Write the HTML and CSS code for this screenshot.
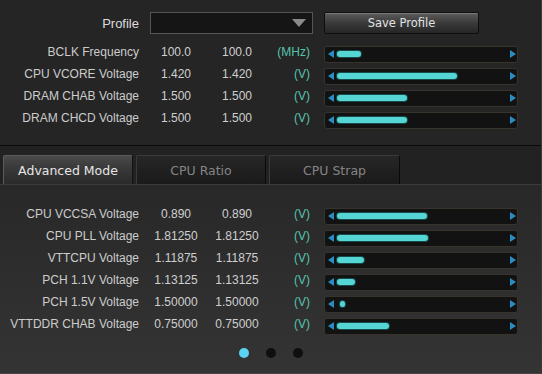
FILE: index.html
```html
<!DOCTYPE html>
<html>
<head>
<meta charset="utf-8">
<link rel="stylesheet" href="styles.css">
</head>
<body>
<div class="app">
  <section class="top">
    <div class="profile-row">
      <span class="profile-label">Profile</span>
      <div class="select"><span class="caret"></span></div>
      <button class="save">Save Profile</button>
    </div>
    <div class="row">
      <span class="label">BCLK Frequency</span><span class="val">100.0</span><span class="val">100.0</span><span class="unit">(MHz)</span>
      <div class="slider"><span class="arr-l"></span><div class="track"><span class="fill" style="width:24px"></span></div><span class="arr-r"></span></div>
    </div>
    <div class="row">
      <span class="label">CPU VCORE Voltage</span><span class="val">1.420</span><span class="val">1.420</span><span class="unit">(V)</span>
      <div class="slider"><span class="arr-l"></span><div class="track"><span class="fill" style="width:120px"></span></div><span class="arr-r"></span></div>
    </div>
    <div class="row">
      <span class="label">DRAM CHAB Voltage</span><span class="val">1.500</span><span class="val">1.500</span><span class="unit">(V)</span>
      <div class="slider"><span class="arr-l"></span><div class="track"><span class="fill" style="width:70px"></span></div><span class="arr-r"></span></div>
    </div>
    <div class="row">
      <span class="label">DRAM CHCD Voltage</span><span class="val">1.500</span><span class="val">1.500</span><span class="unit">(V)</span>
      <div class="slider"><span class="arr-l"></span><div class="track"><span class="fill" style="width:70px"></span></div><span class="arr-r"></span></div>
    </div>
  </section>
  <nav class="tabs">
    <div class="tab active">Advanced Mode</div>
    <div class="tab">CPU Ratio</div>
    <div class="tab">CPU Strap</div>
  </nav>
  <section class="bottom">
    <div class="row">
      <span class="label">CPU VCCSA Voltage</span><span class="val">0.890</span><span class="val">0.890</span><span class="unit">(V)</span>
      <div class="slider"><span class="arr-l"></span><div class="track"><span class="fill" style="width:90px"></span></div><span class="arr-r"></span></div>
    </div>
    <div class="row">
      <span class="label">CPU PLL Voltage</span><span class="val">1.81250</span><span class="val">1.81250</span><span class="unit">(V)</span>
      <div class="slider"><span class="arr-l"></span><div class="track"><span class="fill" style="width:91px"></span></div><span class="arr-r"></span></div>
    </div>
    <div class="row">
      <span class="label">VTTCPU Voltage</span><span class="val">1.11875</span><span class="val">1.11875</span><span class="unit">(V)</span>
      <div class="slider"><span class="arr-l"></span><div class="track"><span class="fill" style="width:27px"></span></div><span class="arr-r"></span></div>
    </div>
    <div class="row">
      <span class="label">PCH 1.1V Voltage</span><span class="val">1.13125</span><span class="val">1.13125</span><span class="unit">(V)</span>
      <div class="slider"><span class="arr-l"></span><div class="track"><span class="fill" style="width:18px"></span></div><span class="arr-r"></span></div>
    </div>
    <div class="row">
      <span class="label">PCH 1.5V Voltage</span><span class="val">1.50000</span><span class="val">1.50000</span><span class="unit">(V)</span>
      <div class="slider"><span class="arr-l"></span><div class="track"><span class="fill" style="width:5px;margin-left:3px"></span></div><span class="arr-r"></span></div>
    </div>
    <div class="row">
      <span class="label">VTTDDR CHAB Voltage</span><span class="val">0.75000</span><span class="val">0.75000</span><span class="unit">(V)</span>
      <div class="slider"><span class="arr-l"></span><div class="track"><span class="fill" style="width:52px"></span></div><span class="arr-r"></span></div>
    </div>
    <div class="dots">
      <span class="dot on"></span><span class="dot"></span><span class="dot"></span>
    </div>
  </section>
</div>
</body>
</html>
```
FILE: styles.css
```css
* { box-sizing: border-box; }
html, body { margin: 0; padding: 0; }
body {
  width: 542px;
  height: 374px;
  overflow: hidden;
  background: #242424;
  font-family: "Liberation Sans", Arial, sans-serif;
  font-size: 12px;
  color: #cfcfcf;
}
.app {
  width: 542px;
  height: 374px;
  display: flex;
  flex-direction: column;
  border-right: 1px solid #3a3a3a;
}
.top {
  height: 146px;
  padding-top: 12px;
  background: #252525;
  border-bottom: 1px solid #0b0b0b;
}
.profile-row {
  display: flex;
  align-items: center;
  height: 22px;
  margin-bottom: 7px;
}
.profile-label {
  width: 139px;
  text-align: right;
  font-size: 13px;
  color: #dcdcdc;
}
.select {
  margin-left: 11px;
  width: 163px;
  height: 22px;
  background: #151515;
  border: 1px solid #555;
  display: flex;
  align-items: center;
  justify-content: flex-end;
  padding-right: 6px;
}
.caret {
  width: 0;
  height: 0;
  border-left: 7px solid transparent;
  border-right: 7px solid transparent;
  border-top: 8px solid #8a8a8a;
}
.save {
  margin-left: 11px;
  width: 155px;
  height: 22px;
  padding: 0;
  border: 1px solid #0e0e0e;
  border-radius: 2px;
  background: linear-gradient(#5c5c5c, #3a3a3a 50%, #262626);
  box-shadow: inset 0 1px 0 #7a7a7a;
  color: #e2e2e2;
  font-family: "DejaVu Sans", Verdana, sans-serif;
  font-size: 11.5px;
}
.row {
  display: grid;
  grid-template-columns: 139px 74px 48px 50px 207px;
  align-items: center;
  height: 22px;
}
.label { text-align: right; color: #cccccc; }
.val { text-align: center; color: #cfcfcf; }
.unit { text-align: right; padding-right: 1px; color: #55c4ad; }
.slider {
  margin-left: 13px;
  margin-top: 4px;
  width: 194px;
  height: 17px;
  background: #121212;
  border: 1px solid #38332c;
  border-radius: 3px;
  display: flex;
  align-items: center;
  padding: 0 1px 0 3px;
}
.arr-l, .arr-r {
  width: 0;
  height: 0;
  border-top: 4px solid transparent;
  border-bottom: 4px solid transparent;
}
.arr-l { border-right: 6px solid #2a8dc2; }
.arr-r { border-left: 6px solid #2a8dc2; }
.track {
  flex: 1;
  display: flex;
  align-items: center;
  padding-left: 3px;
  height: 100%;
}
.fill {
  display: block;
  height: 6px;
  border-radius: 3px;
  background: #55d5d4;
  box-shadow: 0 0 0 1px #164c4c;
}
.tabs {
  height: 38px;
  background: #222;
  display: flex;
  align-items: flex-end;
  padding-left: 3px;
  gap: 3px;
}
.tab {
  width: 130px;
  height: 29px;
  display: flex;
  align-items: center;
  justify-content: center;
  font-family: "DejaVu Sans", Verdana, sans-serif;
  font-size: 12.5px;
  color: #858585;
  background: linear-gradient(#262626, #1a1a1a);
  border: 1px solid #3a3a3a;
  border-bottom: none;
  border-right-color: #0a0a0a;
  border-radius: 2px 2px 0 0;
}
.tab.active {
  color: #e6e6e6;
  background: linear-gradient(#4a4a4a, #3a3a3a 40%, #2a2a2a);
  border-color: #5a5a5a;
  border-right-color: #111;
}
.tab:nth-child(3) { width: 131px; }
.bottom {
  flex: 1;
  padding-top: 18px;
  background: linear-gradient(#282828, #343434);
  border-top: 1px solid #3c3c3c;
  border-bottom: 1px solid #444;
}
.dots {
  display: flex;
  justify-content: center;
  gap: 17px;
  margin-top: 13px;
}
.dot {
  width: 10px;
  height: 10px;
  border-radius: 50%;
  background: #0f0f0f;
}
.dot.on { background: #5bd3f3; }
```
